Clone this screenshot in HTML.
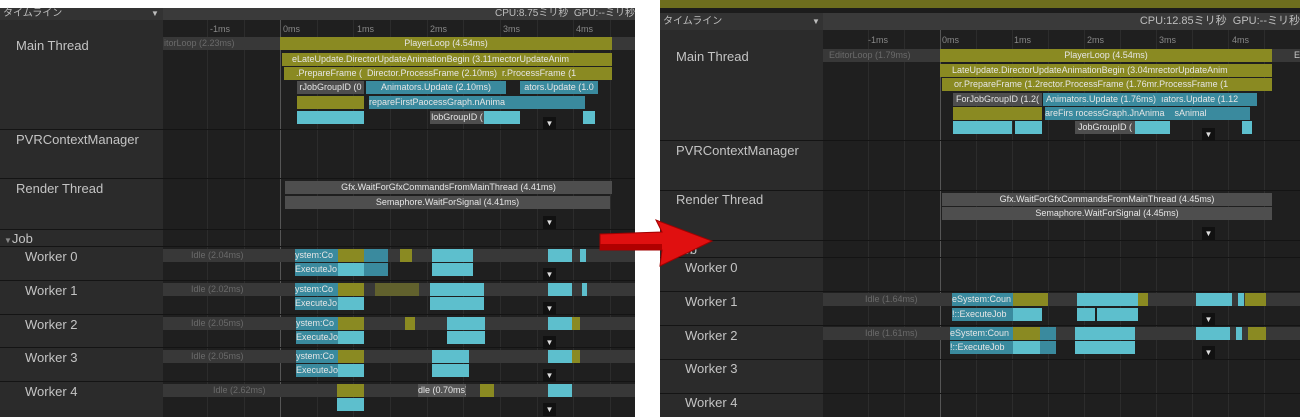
<!DOCTYPE html>
<html><head><meta charset="utf-8"><style>
*{margin:0;padding:0;box-sizing:border-box}
body{width:1300px;height:417px;background:#fff;position:relative;overflow:hidden;font-family:"Liberation Sans","Noto Sans CJK JP",sans-serif}
div{position:absolute}
.side{background:#2b2b2b}
.tl{background:#1f1f1f}
.hl{height:1px;background:#141414}
.vl{width:1px;background:#2c2c2c}
.lab{color:#c4c4c4;font-size:13px;white-space:nowrap}
.b{height:13px;font-size:9px;line-height:13px;color:#e6e6e6;text-align:center;overflow:hidden;white-space:nowrap}
.o{background:#8a8a22}.t{background:#3a8a9e}.c{background:#5dbfcd}.g{background:#4e4e4e}.s{background:#383838;color:#6a6a6a;text-align:left}
.btn{width:13px;height:13px;background:#111;color:#ddd;font-size:8px;line-height:13px;text-align:center}
.rl{color:#888;font-size:9px}
.hdr{background:#3a3a3a;color:#bdbdbd;font-size:10px;line-height:12px}
</style></head><body>

<!-- LEFT PANEL -->
<div class="hdr" style="left:0;top:8px;width:635px;height:12px"></div>
<div class="hdr" style="left:0;top:8px;width:163px;height:12px;background:#333;padding-left:3px">タイムライン<span style="position:absolute;left:151px;font-size:8px">▼</span></div>
<div class="hdr" style="left:440px;top:8px;width:195px;height:12px;text-align:right;background:none;white-space:nowrap;overflow:hidden">CPU:8.75ミリ秒&nbsp; GPU:--ミリ秒</div>
<div class="side" style="left:0;top:20px;width:163px;height:397px"></div>
<div class="tl" style="left:163px;top:20px;width:472px;height:397px"></div>
<!-- grid -->
<div class="vl" style="left:207px;top:20px;height:397px"></div>
<div class="vl" style="left:244px;top:20px;height:397px"></div>
<div class="vl" style="left:280px;top:20px;height:397px;background:#555"></div>
<div class="vl" style="left:317px;top:20px;height:397px"></div>
<div class="vl" style="left:353px;top:20px;height:397px"></div>
<div class="vl" style="left:390px;top:20px;height:397px"></div>
<div class="vl" style="left:427px;top:20px;height:397px"></div>
<div class="vl" style="left:463px;top:20px;height:397px"></div>
<div class="vl" style="left:500px;top:20px;height:397px"></div>
<div class="vl" style="left:537px;top:20px;height:397px"></div>
<div class="vl" style="left:573px;top:20px;height:397px"></div>
<div class="vl" style="left:610px;top:20px;height:397px"></div>
<div class="rl" style="left:210px;top:24px">-1ms</div>
<div class="rl" style="left:283px;top:24px">0ms</div>
<div class="rl" style="left:357px;top:24px">1ms</div>
<div class="rl" style="left:430px;top:24px">2ms</div>
<div class="rl" style="left:503px;top:24px">3ms</div>
<div class="rl" style="left:576px;top:24px">4ms</div>
<!-- row lines -->
<div class="hl" style="left:0;top:129px;width:635px"></div>
<div class="hl" style="left:0;top:178px;width:635px"></div>
<div class="hl" style="left:0;top:229px;width:635px"></div>
<div class="hl" style="left:0;top:246px;width:635px"></div>
<div class="hl" style="left:0;top:280px;width:635px"></div>
<div class="hl" style="left:0;top:314px;width:635px"></div>
<div class="hl" style="left:0;top:347px;width:635px"></div>
<div class="hl" style="left:0;top:381px;width:635px"></div>
<div class="lab" style="left:16px;top:38px">Main Thread</div>
<div class="lab" style="left:16px;top:132px">PVRContextManager</div>
<div class="lab" style="left:16px;top:181px">Render Thread</div>
<div class="lab" style="left:4px;top:231px"><span style="font-size:8px;color:#888">▼</span>Job</div>
<div class="lab" style="left:25px;top:249px">Worker 0</div>
<div class="lab" style="left:25px;top:283px">Worker 1</div>
<div class="lab" style="left:25px;top:317px">Worker 2</div>
<div class="lab" style="left:25px;top:350px">Worker 3</div>
<div class="lab" style="left:25px;top:384px">Worker 4</div>
<!-- main bars -->
<div class="b s" style="left:163px;top:37px;width:117px;padding-left:1px">itorLoop (2.23ms)</div>
<div class="b o" style="left:280px;top:37px;width:332px">PlayerLoop (4.54ms)</div>
<div class="b s" style="left:612px;top:37px;width:23px"></div>
<div class="b o" style="left:282px;top:53px;width:330px;text-align:left;padding-left:10px">eLateUpdate.DirectorUpdateAnimationBegin (3.11mectorUpdateAnim</div>
<div class="b o" style="left:284px;top:67px;width:328px;text-align:left;padding-left:12px">.PrepareFrame (&nbsp; Director.ProcessFrame (2.10ms)&nbsp; r.ProcessFrame (1</div>
<div class="b g" style="left:297px;top:81px;width:67px">rJobGroupID (0</div>
<div class="b t" style="left:366px;top:81px;width:140px">Animators.Update (2.10ms)</div>
<div class="b t" style="left:520px;top:81px;width:78px">ators.Update (1.0</div>
<div class="b o" style="left:297px;top:96px;width:67px"></div>
<div class="b t" style="left:369px;top:96px;width:216px;text-align:left">repareFirstPaocessGraph.nAnima</div>
<div class="b c" style="left:297px;top:111px;width:67px"></div>
<div class="b g" style="left:430px;top:111px;width:54px">lobGroupID (</div>
<div class="b c" style="left:484px;top:111px;width:36px"></div>
<div class="b c" style="left:583px;top:111px;width:12px"></div>
<div class="btn" style="left:543px;top:117px">▼</div>
<!-- render -->
<div class="b g" style="left:285px;top:181px;width:327px">Gfx.WaitForGfxCommandsFromMainThread (4.41ms)</div>
<div class="b g" style="left:285px;top:196px;width:325px">Semaphore.WaitForSignal (4.41ms)</div>
<div class="btn" style="left:543px;top:216px">▼</div>
<!-- workers left -->
<div class="b s" style="left:163px;top:249px;width:472px;padding-left:28px">Idle (2.04ms)</div>
<div class="b t" style="left:295px;top:249px;width:43px;text-align:left">ystem:Co</div><div class="b o" style="left:338px;top:249px;width:26px"></div><div class="b t" style="left:364px;top:249px;width:24px"></div><div class="b o" style="left:400px;top:249px;width:12px"></div><div class="b c" style="left:432px;top:249px;width:41px"></div><div class="b c" style="left:548px;top:249px;width:24px"></div><div class="b c" style="left:580px;top:249px;width:6px"></div>
<div class="b t" style="left:295px;top:263px;width:43px;text-align:left">ExecuteJo</div><div class="b c" style="left:338px;top:263px;width:26px"></div><div class="b t" style="left:364px;top:263px;width:24px"></div><div class="b c" style="left:432px;top:263px;width:41px"></div><div class="btn" style="left:543px;top:268px">▼</div>

<div class="b s" style="left:163px;top:283px;width:472px;padding-left:28px">Idle (2.02ms)</div>
<div class="b t" style="left:295px;top:283px;width:43px;text-align:left">ystem:Co</div><div class="b o" style="left:338px;top:283px;width:26px"></div><div class="b o" style="left:375px;top:283px;width:44px;opacity:.5"></div><div class="b c" style="left:430px;top:283px;width:54px"></div><div class="b c" style="left:548px;top:283px;width:24px"></div><div class="b c" style="left:582px;top:283px;width:5px"></div>
<div class="b t" style="left:295px;top:297px;width:43px;text-align:left">ExecuteJo</div><div class="b c" style="left:338px;top:297px;width:26px"></div><div class="b c" style="left:430px;top:297px;width:54px"></div><div class="btn" style="left:543px;top:302px">▼</div>

<div class="b s" style="left:163px;top:317px;width:472px;padding-left:28px">Idle (2.05ms)</div>
<div class="b t" style="left:296px;top:317px;width:42px;text-align:left">ystem:Co</div><div class="b o" style="left:338px;top:317px;width:26px"></div><div class="b o" style="left:405px;top:317px;width:10px"></div><div class="b c" style="left:447px;top:317px;width:38px"></div><div class="b c" style="left:548px;top:317px;width:24px"></div><div class="b o" style="left:572px;top:317px;width:8px"></div>
<div class="b t" style="left:296px;top:331px;width:42px;text-align:left">ExecuteJo</div><div class="b c" style="left:338px;top:331px;width:26px"></div><div class="b c" style="left:447px;top:331px;width:38px"></div><div class="btn" style="left:543px;top:336px">▼</div>

<div class="b s" style="left:163px;top:350px;width:472px;padding-left:28px">Idle (2.05ms)</div>
<div class="b t" style="left:296px;top:350px;width:42px;text-align:left">ystem:Co</div><div class="b o" style="left:338px;top:350px;width:26px"></div><div class="b c" style="left:432px;top:350px;width:37px"></div><div class="b c" style="left:548px;top:350px;width:24px"></div><div class="b o" style="left:572px;top:350px;width:8px"></div>
<div class="b t" style="left:296px;top:364px;width:42px;text-align:left">ExecuteJo</div><div class="b c" style="left:338px;top:364px;width:26px"></div><div class="b c" style="left:432px;top:364px;width:37px"></div><div class="btn" style="left:543px;top:369px">▼</div>

<div class="b s" style="left:163px;top:384px;width:472px;padding-left:50px">Idle (2.62ms)</div>
<div class="b o" style="left:337px;top:384px;width:27px"></div><div class="b" style="left:418px;top:384px;width:48px;background:#555">dle (0.70ms)</div><div class="b o" style="left:480px;top:384px;width:14px"></div><div class="b c" style="left:548px;top:384px;width:24px"></div>
<div class="b c" style="left:337px;top:398px;width:27px"></div><div class="btn" style="left:543px;top:403px">▼</div>

<!-- RIGHT PANEL -->
<div style="left:660px;top:0;width:640px;height:8px;background:#6e6e1e"></div>
<div style="left:660px;top:8px;width:640px;height:5px;background:#1c1c1c"></div>
<div class="hdr" style="left:660px;top:13px;width:640px;height:17px;line-height:17px"></div>
<div class="hdr" style="left:660px;top:13px;width:163px;height:17px;line-height:17px;background:#333;padding-left:3px">タイムライン<span style="position:absolute;left:152px;font-size:8px">▼</span></div>
<div class="hdr" style="left:1080px;top:13px;width:220px;height:17px;line-height:17px;text-align:right;background:none;white-space:nowrap;overflow:hidden;font-size:11px">CPU:12.85ミリ秒&nbsp; GPU:--ミリ秒</div>
<div class="side" style="left:660px;top:30px;width:163px;height:387px"></div>
<div class="tl" style="left:823px;top:30px;width:477px;height:387px"></div>
<div class="vl" style="left:868px;top:30px;height:387px"></div>
<div class="vl" style="left:904px;top:30px;height:387px"></div>
<div class="vl" style="left:940px;top:30px;height:387px;background:#555"></div>
<div class="vl" style="left:976px;top:30px;height:387px"></div>
<div class="vl" style="left:1012px;top:30px;height:387px"></div>
<div class="vl" style="left:1048px;top:30px;height:387px"></div>
<div class="vl" style="left:1084px;top:30px;height:387px"></div>
<div class="vl" style="left:1120px;top:30px;height:387px"></div>
<div class="vl" style="left:1156px;top:30px;height:387px"></div>
<div class="vl" style="left:1192px;top:30px;height:387px"></div>
<div class="vl" style="left:1228px;top:30px;height:387px"></div>
<div class="vl" style="left:1264px;top:30px;height:387px"></div>
<div class="rl" style="left:868px;top:35px">-1ms</div>
<div class="rl" style="left:942px;top:35px">0ms</div>
<div class="rl" style="left:1014px;top:35px">1ms</div>
<div class="rl" style="left:1087px;top:35px">2ms</div>
<div class="rl" style="left:1159px;top:35px">3ms</div>
<div class="rl" style="left:1232px;top:35px">4ms</div>
<div class="hl" style="left:660px;top:140px;width:640px"></div>
<div class="hl" style="left:660px;top:190px;width:640px"></div>
<div class="hl" style="left:660px;top:240px;width:640px"></div>
<div class="hl" style="left:660px;top:257px;width:640px"></div>
<div class="hl" style="left:660px;top:291px;width:640px"></div>
<div class="hl" style="left:660px;top:325px;width:640px"></div>
<div class="hl" style="left:660px;top:359px;width:640px"></div>
<div class="hl" style="left:660px;top:393px;width:640px"></div>
<div class="lab" style="left:676px;top:49px">Main Thread</div>
<div class="lab" style="left:676px;top:143px">PVRContextManager</div>
<div class="lab" style="left:676px;top:192px">Render Thread</div>
<div class="lab" style="left:676px;top:242px">Job</div>
<div class="lab" style="left:685px;top:260px">Worker 0</div>
<div class="lab" style="left:685px;top:294px">Worker 1</div>
<div class="lab" style="left:685px;top:328px">Worker 2</div>
<div class="lab" style="left:685px;top:361px">Worker 3</div>
<div class="lab" style="left:685px;top:395px">Worker 4</div>
<div class="b s" style="left:823px;top:49px;width:117px;padding-left:6px">EditorLoop (1.79ms)</div>
<div class="b o" style="left:940px;top:49px;width:332px">PlayerLoop (4.54ms)</div>
<div class="b s" style="left:1272px;top:49px;width:28px;color:#ccc;padding-left:22px">E</div>
<div class="b o" style="left:940px;top:64px;width:332px;text-align:left;padding-left:12px">LateUpdate.DirectorUpdateAnimationBegin (3.04mrectorUpdateAnim</div>
<div class="b o" style="left:942px;top:78px;width:330px;text-align:left;padding-left:12px">or.PrepareFrame (1.2rector.ProcessFrame (1.76mr.ProcessFrame (1</div>
<div class="b g" style="left:953px;top:93px;width:89px">ForJobGroupID (1.2(</div>
<div class="b t" style="left:1043px;top:93px;width:214px;text-align:left;padding-left:3px">Animators.Update (1.76ms)&nbsp; ıators.Update (1.12</div>
<div class="b o" style="left:953px;top:107px;width:89px"></div>
<div class="b t" style="left:1045px;top:107px;width:205px;text-align:left">areFirs rocessGraph.JnAnima&nbsp;&nbsp;&nbsp; sAnimal</div>
<div class="b c" style="left:953px;top:121px;width:59px"></div>
<div class="b c" style="left:1015px;top:121px;width:27px"></div>
<div class="b g" style="left:1075px;top:121px;width:60px">JobGroupID (</div>
<div class="b c" style="left:1135px;top:121px;width:35px"></div>
<div class="b c" style="left:1242px;top:121px;width:10px"></div>
<div class="btn" style="left:1202px;top:128px">▼</div>
<div class="b g" style="left:942px;top:193px;width:330px">Gfx.WaitForGfxCommandsFromMainThread (4.45ms)</div>
<div class="b g" style="left:942px;top:207px;width:330px">Semaphore.WaitForSignal (4.45ms)</div>
<div class="btn" style="left:1202px;top:227px">▼</div>
<div class="b s" style="left:823px;top:293px;width:477px;padding-left:42px">Idle (1.64ms)</div>
<div class="b t" style="left:952px;top:293px;width:61px;text-align:left">eSystem:Coun</div><div class="b o" style="left:1013px;top:293px;width:35px"></div><div class="b c" style="left:1077px;top:293px;width:61px"></div><div class="b o" style="left:1138px;top:293px;width:10px"></div><div class="b c" style="left:1196px;top:293px;width:36px"></div><div class="b c" style="left:1238px;top:293px;width:6px"></div><div class="b o" style="left:1245px;top:293px;width:21px"></div>
<div class="b t" style="left:952px;top:308px;width:61px;text-align:left">!::ExecuteJob</div><div class="b c" style="left:1013px;top:308px;width:29px"></div><div class="b c" style="left:1077px;top:308px;width:18px"></div><div class="b c" style="left:1097px;top:308px;width:41px"></div><div class="btn" style="left:1202px;top:313px">▼</div>
<div class="b s" style="left:823px;top:327px;width:477px;padding-left:42px">Idle (1.61ms)</div>
<div class="b t" style="left:950px;top:327px;width:63px;text-align:left">eSystem:Coun</div><div class="b o" style="left:1013px;top:327px;width:27px"></div><div class="b t" style="left:1040px;top:327px;width:16px"></div><div class="b c" style="left:1075px;top:327px;width:60px"></div><div class="b c" style="left:1196px;top:327px;width:34px"></div><div class="b c" style="left:1236px;top:327px;width:6px"></div><div class="b o" style="left:1248px;top:327px;width:18px"></div>
<div class="b t" style="left:950px;top:341px;width:63px;text-align:left">!::ExecuteJob</div><div class="b c" style="left:1013px;top:341px;width:27px"></div><div class="b t" style="left:1040px;top:341px;width:16px"></div><div class="b c" style="left:1075px;top:341px;width:60px"></div><div class="btn" style="left:1202px;top:346px">▼</div>

<!-- arrow -->
<svg style="position:absolute;left:0;top:0" width="1300" height="417">
<polygon points="600,234 662,232 656,220 712,241 660,266 662,250 600,250" fill="#e01010" stroke="#a00000" stroke-width="1"/>
<polygon points="600,244 662,244 662,250 600,250" fill="#b00000"/>
</svg>
</body></html>
